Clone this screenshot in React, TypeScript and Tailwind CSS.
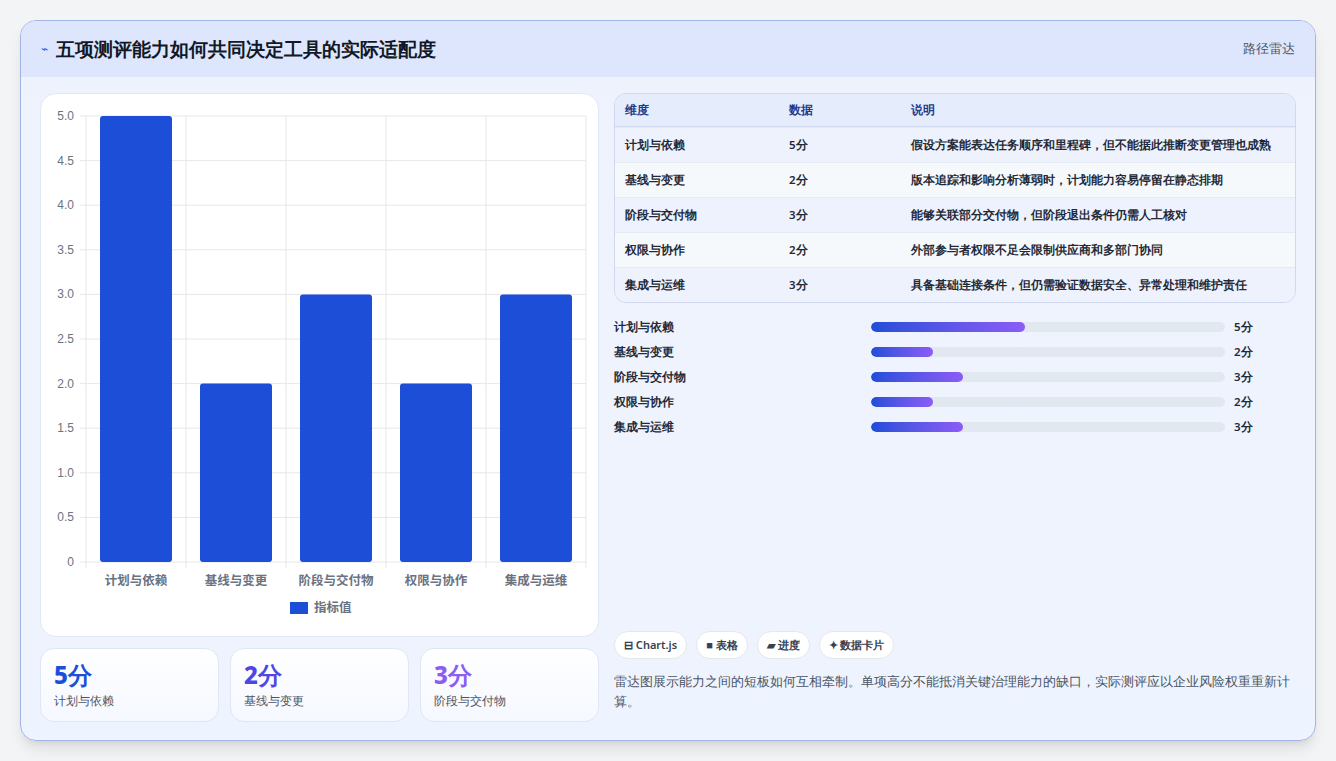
import React from "react";

const rows = [
  ["计划与依赖", 5, "假设方案能表达任务顺序和里程碑，但不能据此推断变更管理也成熟"],
  ["基线与变更", 2, "版本追踪和影响分析薄弱时，计划能力容易停留在静态排期"],
  ["阶段与交付物", 3, "能够关联部分交付物，但阶段退出条件仍需人工核对"],
  ["权限与协作", 2, "外部参与者权限不足会限制供应商和多部门协同"],
  ["集成与运维", 3, "具备基础连接条件，但仍需验证数据安全、异常处理和维护责任"],
] as const;

function Chart() {
  const x0 = 45, x1 = 545, yTop = 22, yBot = 468;
  const ticks = [5, 4.5, 4, 3.5, 3, 2.5, 2, 1.5, 1, 0.5, 0];
  const cw = (x1 - x0) / 5;
  return (
    <svg width="558" height="543" className="block">
      {ticks.map((t) => {
        const y = yBot - (t / 5) * (yBot - yTop);
        return (
          <g key={t}>
            <line x1={x0 - 6} x2={x1} y1={y} y2={y} stroke="#e5e7eb" />
            <text x={x0 - 12} y={y + 4} textAnchor="end" fontSize="12" fill="#6b7280" fontFamily="Liberation Sans, sans-serif">{t === 0 ? "0" : t.toFixed(1)}</text>
          </g>
        );
      })}
      {[0, 1, 2, 3, 4, 5].map((i) => (
        <line key={i} x1={x0 + i * cw} x2={x0 + i * cw} y1={yTop} y2={yBot + 6} stroke="#e5e7eb" />
      ))}
      {rows.map((r, i) => {
        const h = (r[1] / 5) * (yBot - yTop);
        return (
          <g key={i}>
            <rect x={x0 + i * cw + 14} y={yBot - h} width={72} height={h} rx="3" fill="#1d4ed8" />
            <text x={x0 + i * cw + cw / 2} y={yBot + 23} textAnchor="middle" fontSize="12.5" fontWeight="600" fill="#6b7280" fontFamily="Noto Sans CJK SC, sans-serif">{r[0]}</text>
          </g>
        );
      })}
      <rect x="249" y="508" width="18" height="12" fill="#1d4ed8" />
      <text x="273" y="518" fontSize="12.5" fontWeight="600" fill="#6b7280" fontFamily="Noto Sans CJK SC, sans-serif">指标值</text>
    </svg>
  );
}

export default function App() {
  const stats = [
    ["5分", "计划与依赖", "text-[#1d4ed8]"],
    ["2分", "基线与变更", "text-[#4f46e5]"],
    ["3分", "阶段与交付物", "text-[#8b5cf6]"],
  ];
  return (
    <div className="w-[1336px] h-[761px] bg-[#f3f4f6] p-[20px] font-['Inter','Noto_Sans_CJK_SC',sans-serif]">
      <div className="h-[721px] rounded-[16px] border border-[#a5b4e6] bg-gradient-to-b from-[#eef2fd] to-[#eef4ff] overflow-hidden shadow-lg">
        <div className="h-[56px] bg-[#dde6fd] flex items-center justify-between px-[20px]">
          <div className="flex items-center gap-[8px]">
            <span className="text-[#2563eb] text-[12px]">⌁</span>
            <span className="text-[19px] font-bold text-[#111827]">五项测评能力如何共同决定工具的实际适配度</span>
          </div>
          <span className="text-[13px] text-[#4b5563]">路径雷达</span>
        </div>
        <div className="flex gap-[15px] px-[19px] pt-[16px]">
          <div className="w-[559px] flex flex-col gap-[11px]">
            <div className="h-[544px] bg-white rounded-[16px] border border-[#e0e7f5]"><Chart /></div>
            <div className="grid grid-cols-3 gap-[11px]">
              {stats.map((s) => (
                <div key={s[1]} className="h-[74px] rounded-[14px] border border-[#dfe6f5] bg-gradient-to-b from-white to-[#f5f8ff] px-[13px] pt-[10px]">
                  <div className={`text-[24px] font-extrabold leading-[32px] ${s[2]}`}>{s[0]}</div>
                  <div className="text-[12px] text-[#4b5563] mt-[1px]">{s[1]}</div>
                </div>
              ))}
            </div>
          </div>
          <div className="flex-1 flex flex-col h-[628px]">
            <div className="rounded-[12px] border border-[#cfd8ee] overflow-hidden text-[11.5px] font-semibold text-[#1f2937]">
              <div className="flex h-[33px] items-center bg-[#e5edfd] text-[#1e3a8a] border-b border-[#cfd8ee]">
                <div className="w-[174px] pl-[10px]">维度</div><div className="w-[122px]">数据</div><div>说明</div>
              </div>
              {rows.map((r, i) => (
                <div key={i} className={`flex h-[35px] items-center border-t border-[#e5eaf5] ${i % 2 ? "bg-[#f6f9fc]" : "bg-[#eef2fd]"}`}>
                  <div className="w-[174px] pl-[10px]">{r[0]}</div><div className="w-[122px]">{r[1]}分</div><div>{r[2]}</div>
                </div>
              ))}
            </div>
            <div className="flex flex-col mt-[11px] text-[11.5px] font-semibold text-[#1f2937]">
              {rows.map((r, i) => (
                <div key={i} className="flex items-center h-[25px]">
                  <div className="w-[257px]">{r[0]}</div>
                  <div className="w-[354px] h-[10px] rounded-full bg-[#e2e8f0] overflow-hidden">
                    <div className="h-full rounded-full bg-gradient-to-r from-[#1d4ed8] to-[#8b5cf6]" style={{ width: `${r[1] * 8.7}%` }} />
                  </div>
                  <div className="ml-[9px]">{r[1]}分</div>
                </div>
              ))}
            </div>
            <div className="mt-auto flex gap-[9px] text-[11px] font-semibold text-[#374151]">
              {["⊟ Chart.js", "■ 表格", "▰ 进度", "✦ 数据卡片"].map((c) => (
                <span key={c} className="h-[28px] px-[9px] flex items-center rounded-full bg-white border border-[#e5e7eb]">{c}</span>
              ))}
            </div>
            <p className="mt-[12px] text-[13px] leading-[20px] text-[#4b5563] font-medium pr-[4px]">雷达图展示能力之间的短板如何互相牵制。单项高分不能抵消关键治理能力的缺口，实际测评应以企业风险权重重新计算。</p>
            <div className="h-[10px]" />
          </div>
        </div>
      </div>
    </div>
  );
}
